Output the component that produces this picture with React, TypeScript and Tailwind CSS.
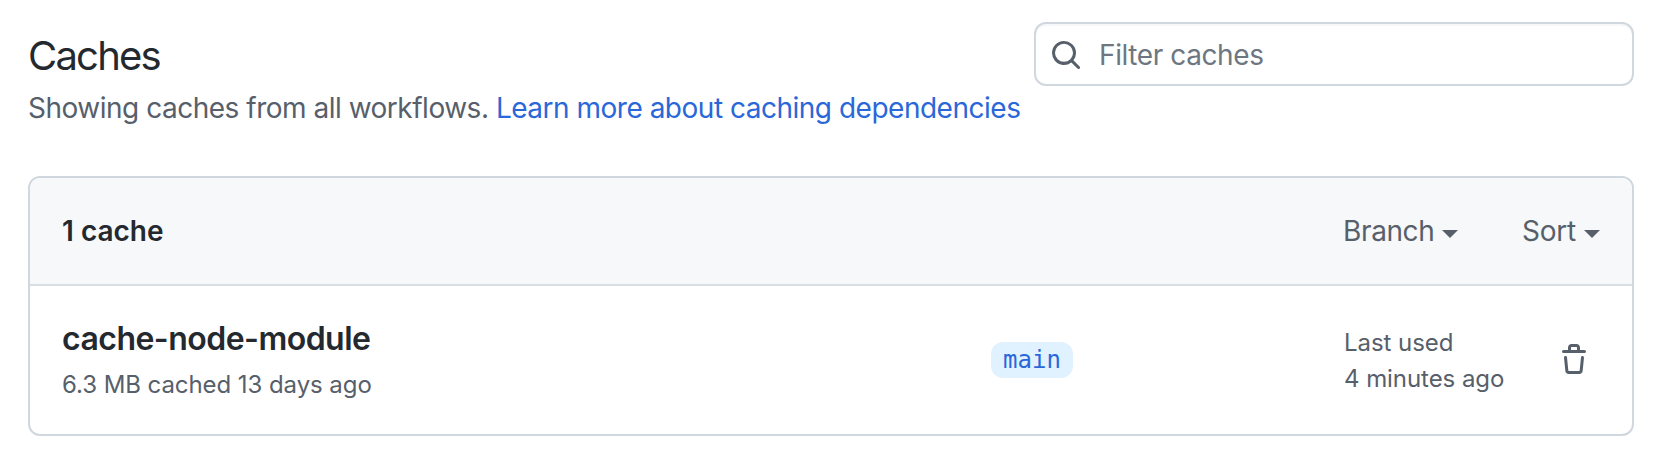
function SearchIcon() {
  return (
    <svg className="mt-0.5 size-8 shrink-0 text-[#57606a]" viewBox="0 0 16 16" fill="currentColor" aria-hidden="true">
      <path d="M10.68 11.74a6 6 0 0 1-7.922-8.982 6 6 0 0 1 8.982 7.922l3.04 3.04a.749.749 0 0 1-.326 1.275.749.749 0 0 1-.734-.215ZM11.5 7a4.499 4.499 0 1 0-8.997 0A4.499 4.499 0 0 0 11.5 7Z" />
    </svg>
  );
}

function TrashIcon() {
  return (
    <svg className="size-8" viewBox="0 0 16 16" fill="currentColor" aria-hidden="true">
      <path d="M11 1.75V3h2.25a.75.75 0 0 1 0 1.5H2.75a.75.75 0 0 1 0-1.5H5V1.75C5 .784 5.784 0 6.75 0h2.5C10.216 0 11 .784 11 1.75ZM4.496 6.675l.66 6.6a.25.25 0 0 0 .249.225h5.19a.25.25 0 0 0 .249-.225l.66-6.6a.75.75 0 0 1 1.492.149l-.66 6.6A1.748 1.748 0 0 1 10.595 15h-5.19a1.75 1.75 0 0 1-1.741-1.575l-.66-6.6a.75.75 0 1 1 1.492-.15ZM6.5 1.75V3h3V1.75a.25.25 0 0 0-.25-.25h-2.5a.25.25 0 0 0-.25.25Z" />
    </svg>
  );
}

function Caret() {
  return <span className="mt-1.5 ml-2 border-x-8 border-t-8 border-x-transparent border-t-[#57606a]" />;
}

export default function App() {
  return (
    <div className="h-[470px] w-[1656px] bg-white pr-[22px] pl-7 font-['Inter',sans-serif] text-[28px] text-[#57606a]">
      <header className="flex h-[176px] items-start justify-between">
        <div className="pt-[26px] whitespace-nowrap">
          <h1 className="text-[40px] leading-[60px] tracking-[-1.8px] text-[#24292f]">Caches</h1>
          <p className="text-[28px] leading-[44px] tracking-[-0.49px]">
            Showing caches from all workflows.{" "}
            <a href="#" className="text-[#2a67d8]">Learn more about caching dependencies</a>
          </p>
        </div>
        <label className="mt-[22px] flex h-16 w-[600px] items-center rounded-xl border-2 border-[#d0d7de] pl-3.5 shadow-[inset_0_2px_0_rgba(208,215,222,0.2)]">
          <SearchIcon />
          <input
            type="text"
            placeholder="Filter caches"
            className="ml-[17px] w-[480px] bg-transparent pt-0.5 text-[28px] tracking-[-0.4px] outline-none placeholder:text-[#6e7781]"
          />
        </label>
      </header>

      <section className="rounded-xl border-2 border-[#d0d7de]">
        <div className="flex h-[108px] items-center justify-between rounded-t-[10px] border-b-2 border-[#d8dee4] bg-[#f6f8fa] pr-8 pl-8 text-[28px]">
          <h2 className="font-semibold text-[#24292f]">1 cache</h2>
          <div className="flex">
            <button type="button" className="flex w-[179px] items-center tracking-[-0.4px]">
              Branch
              <Caret />
            </button>
            <button type="button" className="flex items-center tracking-[-0.25px]">
              Sort
              <Caret />
            </button>
          </div>
        </div>

        <div className="flex h-[148px] items-start pl-8 whitespace-nowrap">
          <div className="w-[929px] pt-[29px]">
            <h3 className="text-[32px] leading-[48px] font-semibold tracking-[-0.53px] text-[#24292f]">cache-node-module</h3>
            <p className="mt-1 text-[24px] leading-9 tracking-[-0.07px]">6.3 MB cached 13 days ago</p>
          </div>
          <div className="w-[353px] pt-14">
            <span className="flex h-9 w-[82px] items-center justify-center rounded-xl bg-[#e0f2ff] font-['DejaVu_Sans_Mono',monospace] text-[24px] text-[#2a67d8]">
              main
            </span>
          </div>
          <div className="w-[214px] pt-[39px] text-[24px] leading-9 tracking-[-0.06px]">
            <p>Last used</p>
            <p>4 minutes ago</p>
          </div>
          <button type="button" aria-label="Delete cache" className="mt-[58px]">
            <TrashIcon />
          </button>
        </div>
      </section>
    </div>
  );
}
